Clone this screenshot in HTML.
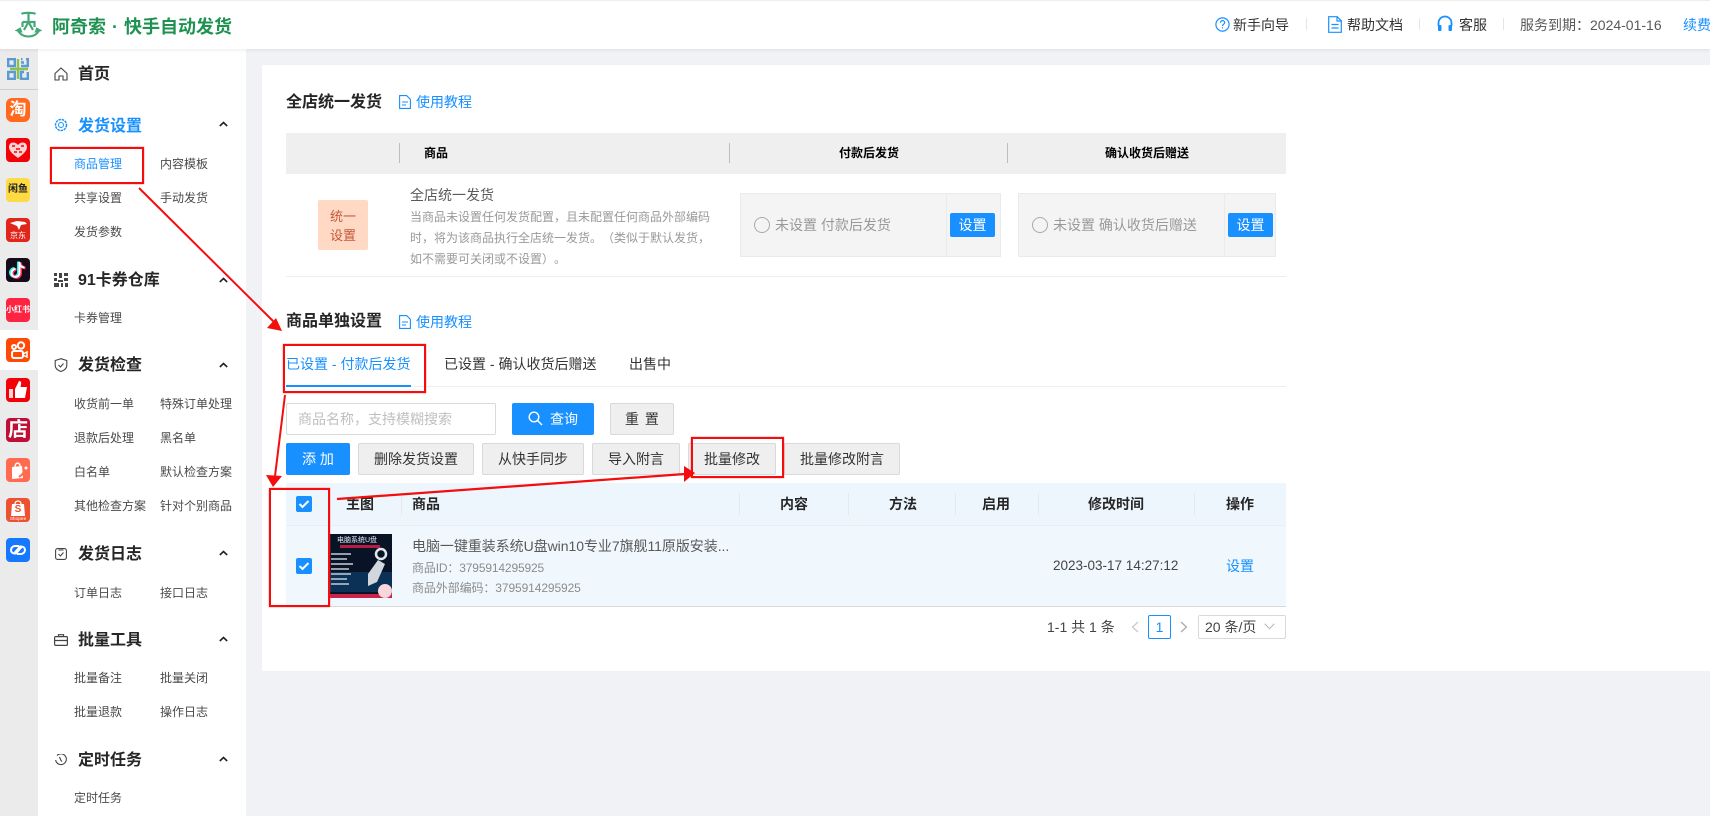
<!DOCTYPE html>
<html lang="zh-CN"><head><meta charset="utf-8"><title>阿奇索</title>
<style>
*{box-sizing:border-box;margin:0;padding:0}
html,body{width:1710px;height:816px;overflow:hidden;background:#f0f2f5;font-family:"Liberation Sans","Noto Sans CJK SC",sans-serif;color:#333;text-spacing-trim:space-all;font-feature-settings:"chws" 0}
.a{position:absolute}
.t{position:absolute;white-space:nowrap;line-height:20px;height:20px}
.h{font-size:16px;font-weight:700;color:#262626}
.s{font-size:12px;color:#4a4a4a}
.btn{position:absolute;height:32px;background:#efefef;border:1px solid #d9d9d9;border-radius:2px;font-size:14px;color:#333;text-align:center;line-height:30px;white-space:nowrap}
.p{background:#1890ff;border-color:#1890ff;color:#fff}
.rb{position:absolute;border:2px solid #f50c0c;box-shadow:0 0 1px #f33}
.ri{position:absolute;left:6px;width:24px;height:24px;border-radius:4px;overflow:hidden;text-align:center;color:#fff}
.sep{position:absolute;width:1px;background:#bdbdbd}
.sep2{position:absolute;width:1px;background:#e3e9ee}
.ck{position:absolute;left:296px;width:16px;height:16px;background:#1890ff;border-radius:2px}
</style></head><body>
<!-- header -->
<div class="a" style="left:0;top:0;width:1710px;height:49px;background:#fff;border-top:1px solid #eee;box-shadow:0 1px 4px rgba(0,0,0,.08);z-index:3">
<svg class="a" style="left:15px;top:10px" width="27" height="28" viewBox="0 0 27 28" fill="none" stroke="#46a878" stroke-width="2.200"><path d="M6.500 3c2-1.600 12-1.600 14 0M13.500 2v9"/><path d="M7.500 11h12v5M7.500 11v5M13.500 11l-4.500 8M13.500 11l4.500 8"/><path d="M2.500 19c2.500 4.500 6 6.500 11 6.500s8.500-2 11-6.500" stroke-width="2"/><path d="M.8 19.500l4.500-2.500 1.500 4zM26.200 19.500l-4.500-2.500-1.500 4z" fill="#46a878" stroke-width="1"/></svg>
<div class="t" style="left:52px;top:16px;font-size:18px;font-weight:700;color:#1f9150;word-spacing:1px">阿奇索 · 快手自动发货</div>
<svg class="a" style="left:1215px;top:16px" width="15" height="15" viewBox="0 0 15 15" fill="none" stroke="#1890ff" stroke-width="1.200"><circle cx="7.500" cy="7.500" r="6.600"/><path d="M5.400 5.800c0-3 4.300-2.700 4.300-.2 0 1.600-2.200 1.700-2.200 3.500"/><path d="M7.500 10.300v1.200"/></svg>
<div class="t" style="left:1233px;top:14px;font-size:14px">新手向导</div>
<div class="a" style="left:1306px;top:17px;width:1px;height:12px;background:#e5e5e5"></div>
<svg class="a" style="left:1328px;top:15px" width="14" height="17" viewBox="0 0 14 17" fill="none" stroke="#1890ff" stroke-width="1.200"><path d="M.7.7h8.500l4.100 4.100v11.500H.7zM9 .7v4.300h4.300M3.500 8.500h7M3.500 12h7"/></svg>
<div class="t" style="left:1347px;top:14px;font-size:14px">帮助文档</div>
<div class="a" style="left:1419px;top:17px;width:1px;height:12px;background:#e5e5e5"></div>
<svg class="a" style="left:1437px;top:14px" width="16" height="17" viewBox="0 0 16 17" fill="none" stroke="#1890ff" stroke-width="1.800"><path d="M1.500 11V8a6.500 6.500 0 0 1 13 0v3"/><rect x="1" y="10" width="3.500" height="6" rx="1" fill="#1890ff" stroke="none"/><rect x="11.500" y="10" width="3.500" height="6" rx="1" fill="#1890ff" stroke="none"/></svg>
<div class="t" style="left:1459px;top:14px;font-size:14px">客服</div>
<div class="a" style="left:1503px;top:17px;width:1px;height:12px;background:#e5e5e5"></div>
<div class="t" style="left:1520px;top:14px;font-size:14px;color:#595959">服务到期：2024-01-16</div>
<div class="t" style="left:1683px;top:14px;font-size:14px;color:#1890ff">续费</div>
</div>
<!-- rail -->
<div class="a" style="left:0;top:49px;width:38px;height:767px;background:#ebebeb"></div>
<div class="a" style="left:0;top:89px;width:38px;height:1px;background:#cfcfcf"></div>
<div class="a" style="left:0;top:330px;width:38px;height:40px;background:#fff"></div>
<svg class="a" style="left:7px;top:58px" width="22" height="22" viewBox="0 0 22 22" fill="none" stroke="#5b9bd5" stroke-width="2.400"><path d="M1.200 8V1.200h6.600V8zM14 1.200h1.500M19 1.200h1.800V8H14M14 4.500h3M1.200 14h6.600v6.800H1.200zM20.800 14v6.800H14V14h3"/><path d="M11 1v20M3 11h18" stroke="#8cc152" stroke-width="2.400"/></svg>
<div class="ri" style="top:98px;background:#ff6a1f;font-size:17px;line-height:24px;font-weight:700;border-radius:6px">淘</div>
<div class="ri" style="top:138px;background:#f40009"><svg width="24" height="24" viewBox="0 0 24 24"><path d="M12 20C5 15 3 12 3 9c0-5 6-6 9-2 3-4 9-3 9 2 0 3-2 6-9 11z" fill="#fbd3d3"/><path d="M6 8h3M10 11h4M15 8h3M8 14h3M13 14h3" stroke="#f40009" stroke-width="1.500"/></svg></div>
<div class="ri" style="top:178px;background:#ffda44;color:#222;font-size:10px;line-height:24px;font-weight:700">闲鱼</div>
<div class="ri" style="top:218px;background:#e1251b"><svg class="a" style="left:0;top:0" width="24" height="14" viewBox="0 0 24 14"><path d="M4 5l7-2 8 1 2 2-6 1-2 5-2-4z" fill="#fff"/></svg><div class="a" style="left:0;top:13px;width:24px;font-size:8px;line-height:10px">京东</div></div>
<div class="ri" style="top:258px;background:#160b18"><svg width="24" height="24" viewBox="0 0 24 24" fill="none" stroke-width="3"><path d="M13.500 4v11a4 4 0 1 1-4-4M13.500 5c.5 3 2.500 4.500 5 4.500" stroke="#25f4ee" transform="translate(-1,-.5)"/><path d="M13.500 4v11a4 4 0 1 1-4-4M13.500 5c.5 3 2.500 4.500 5 4.500" stroke="#fe2c55" transform="translate(1,.5)"/><path d="M13.500 4v11a4 4 0 1 1-4-4M13.500 5c.5 3 2.500 4.500 5 4.500" stroke="#fff" stroke-width="2"/></svg></div>
<div class="ri" style="top:298px;background:#ff2442;font-size:8px;line-height:24px;font-weight:700">小红书</div>
<div class="ri" style="top:338px;background:#ff4906"><svg width="24" height="24" viewBox="0 0 24 24" fill="none" stroke="#fff" stroke-width="2"><circle cx="15" cy="7.500" r="3.200"/><circle cx="8" cy="9" r="2"/><rect x="6" y="13" width="11" height="7" rx="2"/><path d="M17 16l4-2v5l-4-2" stroke-width="1.500"/></svg></div>
<div class="ri" style="top:378px;background:#f40009"><svg width="24" height="24" viewBox="0 0 24 24"><path d="M9 20V11l4-8c2 0 2.500 1.500 2 3.500L14.500 9H21l-2 11z" fill="#fff"/><rect x="3" y="11" width="4" height="9" fill="#ffd6d6"/></svg></div>
<div class="ri" style="top:418px;background:#c00f36;font-size:20px;line-height:24px;font-weight:700">店</div>
<div class="ri" style="top:458px;background:#ff6a50"><svg width="24" height="24" viewBox="0 0 24 24" fill="none"><path d="M6 9l10-1 1 12-11 1z" fill="#fff"/><path d="M9 9c0-5 5-5 5-1" stroke="#fff" stroke-width="1.500"/><path d="M13 19c3-2 5-4 6-8" stroke="#ff6a50" stroke-width="2"/><circle cx="20" cy="10" r="1.500" fill="#fff"/></svg></div>
<div class="ri" style="top:498px;background:#ee5130"><svg class="a" style="left:0;top:0" width="24" height="24" viewBox="0 0 24 24" fill="none"><path d="M6 6h12l1 12H5z" fill="#fff"/><path d="M9 6c0-4 6-4 6 0" stroke="#fff" stroke-width="1.300"/></svg><div class="a" style="left:0;top:6px;width:24px;font-size:10px;line-height:12px;color:#ee5130;font-weight:700">S</div><div class="a" style="left:-6px;top:18px;width:36px;font-size:6px;line-height:6px;transform:scale(.8)">Shopee</div></div>
<div class="ri" style="top:538px;background:#1677ff"><svg width="24" height="24" viewBox="0 0 24 24" fill="none" stroke="#fff" stroke-width="2"><path d="M13 8H9a4.200 4.200 0 0 0-4 4c0 2 1.500 3.500 4 3.500h1l6-7"/><path d="M11 16h4a4.200 4.200 0 0 0 4-4c0-2-1.500-3.500-4-3.500h-1l-6 7"/></svg></div>
<!-- sidebar -->
<div class="a" style="left:38px;top:49px;width:208px;height:767px;background:#fff"></div>
<svg class="a" style="left:54px;top:67px" width="14" height="14" viewBox="0 0 14 14" fill="none" stroke="#444" stroke-width="1.100"><path d="M1 6.500L7 1l6 5.500V13H9V9H5v4H1z"/></svg>
<div class="t h" style="left:78px;top:65px">首页</div>
<svg class="a" style="left:54px;top:118px" width="14" height="14" viewBox="0 0 14 14" fill="none" stroke="#1890ff"><circle cx="7" cy="7" r="2.500"/><circle cx="7" cy="7" r="5.500" stroke-dasharray="2.500 .8" stroke-width="1.500"/></svg>
<div class="t h" style="left:78px;top:117px;color:#1890ff">发货设置</div>
<div class="t s" style="left:74px;top:154px;color:#1890ff">商品管理</div><div class="t s" style="left:160px;top:154px">内容模板</div>
<div class="t s" style="left:74px;top:188px">共享设置</div><div class="t s" style="left:160px;top:188px">手动发货</div>
<div class="t s" style="left:74px;top:222px">发货参数</div>
<svg class="a" style="left:54px;top:273px" width="14" height="14" viewBox="0 0 14 14" fill="#444"><path d="M0 0h3v3H0zM5 0h3v5H5zM10 0h4v3h-4zM0 5h3v3H0zM10 5h4v3h-4zM4 7h5v2H4zM0 10h5v4H0zM7 10h2v4H7zM11 10h3v4h-3z"/></svg>
<div class="t h" style="left:78px;top:271px">91卡券仓库</div>
<div class="t s" style="left:74px;top:308px">卡券管理</div>
<svg class="a" style="left:54px;top:358px" width="14" height="14" viewBox="0 0 14 14" fill="none" stroke="#444" stroke-width="1.100"><path d="M7 .7l5.800 1.800v5c0 3-3 5-5.800 6-2.800-1-5.800-3-5.800-6v-5z"/><path d="M4.500 7l2 2 3-3.500"/></svg>
<div class="t h" style="left:78px;top:356px">发货检查</div>
<div class="t s" style="left:74px;top:394px">收货前一单</div><div class="t s" style="left:160px;top:394px">特殊订单处理</div>
<div class="t s" style="left:74px;top:428px">退款后处理</div><div class="t s" style="left:160px;top:428px">黑名单</div>
<div class="t s" style="left:74px;top:462px">白名单</div><div class="t s" style="left:160px;top:462px">默认检查方案</div>
<div class="t s" style="left:74px;top:496px">其他检查方案</div><div class="t s" style="left:160px;top:496px">针对个别商品</div>
<svg class="a" style="left:55px;top:548px" width="12" height="12" viewBox="0 0 12 12" fill="none" stroke="#444" stroke-width="1.100"><rect x=".6" y=".6" width="10.800" height="10.800" rx="2"/><path d="M3.500 6l2 2 3-3.500M3.500 2h5"/></svg>
<div class="t h" style="left:78px;top:545px">发货日志</div>
<div class="t s" style="left:74px;top:583px">订单日志</div><div class="t s" style="left:160px;top:583px">接口日志</div>
<svg class="a" style="left:54px;top:634px" width="14" height="12" viewBox="0 0 14 12" fill="none" stroke="#444" stroke-width="1.200"><rect x=".6" y="2.600" width="12.800" height="8.800" rx="1"/><path d="M4.500 2.500V.7h5v1.800M.6 6.500h12.800"/></svg>
<div class="t h" style="left:78px;top:631px">批量工具</div>
<div class="t s" style="left:74px;top:668px">批量备注</div><div class="t s" style="left:160px;top:668px">批量关闭</div>
<div class="t s" style="left:74px;top:702px">批量退款</div><div class="t s" style="left:160px;top:702px">操作日志</div>
<svg class="a" style="left:55px;top:754px" width="12" height="12" viewBox="0 0 12 12" fill="none" stroke="#444" stroke-width="1.100"><path d="M2 1.500A5.400 5.400 0 1 1 .6 6M4.500 3l1.500 3.500 1 1"/></svg>
<div class="t h" style="left:78px;top:751px">定时任务</div>
<div class="t s" style="left:74px;top:788px">定时任务</div>
<svg class="a" style="left:219px;top:121px" width="9" height="6" viewBox="0 0 9 6" fill="none" stroke="#222" stroke-width="1.600"><path d="M.8 5L4.500 1.500 8.200 5"/></svg>
<svg class="a" style="left:219px;top:277px" width="9" height="6" viewBox="0 0 9 6" fill="none" stroke="#222" stroke-width="1.600"><path d="M.8 5L4.500 1.500 8.200 5"/></svg>
<svg class="a" style="left:219px;top:362px" width="9" height="6" viewBox="0 0 9 6" fill="none" stroke="#222" stroke-width="1.600"><path d="M.8 5L4.500 1.500 8.200 5"/></svg>
<svg class="a" style="left:219px;top:550px" width="9" height="6" viewBox="0 0 9 6" fill="none" stroke="#222" stroke-width="1.600"><path d="M.8 5L4.500 1.500 8.200 5"/></svg>
<svg class="a" style="left:219px;top:636px" width="9" height="6" viewBox="0 0 9 6" fill="none" stroke="#222" stroke-width="1.600"><path d="M.8 5L4.500 1.500 8.200 5"/></svg>
<svg class="a" style="left:219px;top:756px" width="9" height="6" viewBox="0 0 9 6" fill="none" stroke="#222" stroke-width="1.600"><path d="M.8 5L4.500 1.500 8.200 5"/></svg>
<!-- card -->
<div class="a" style="left:262px;top:65px;width:1448px;height:606px;background:#fff"></div>
<div class="t h" style="left:286px;top:93px">全店统一发货</div>
<svg class="a" style="left:399px;top:95px" width="12" height="14" viewBox="0 0 12 14" fill="none" stroke="#1890ff" stroke-width="1.100"><path d="M.6.6h7l3.800 3.800v9H.6zM3 7h6M3 10h4"/></svg>
<div class="t" style="left:416px;top:92px;font-size:14px;color:#1890ff">使用教程</div>
<div class="a" style="left:286px;top:133px;width:1000px;height:41px;background:#efefef"></div>
<div class="sep" style="left:399px;top:143px;height:20px"></div><div class="sep" style="left:729px;top:143px;height:20px"></div><div class="sep" style="left:1007px;top:143px;height:20px"></div>
<div class="t" style="left:424px;top:143px;font-size:12px;font-weight:700;color:#000">商品</div>
<div class="t" style="left:839px;top:143px;font-size:12px;font-weight:700;color:#000">付款后发货</div>
<div class="t" style="left:1105px;top:143px;font-size:12px;font-weight:700;color:#000">确认收货后赠送</div>
<div class="a" style="left:318px;top:200px;width:50px;height:50px;background:#ffd9c4;border-radius:2px;color:#c5583a;font-size:13px;line-height:19px;text-align:center;padding-top:7px">统一<br>设置</div>
<div class="t" style="left:410px;top:185px;font-size:14px;color:#595959">全店统一发货</div>
<div class="t" style="left:410px;top:207px;font-size:12px;color:#999">当商品未设置任何发货配置，且未配置任何商品外部编码</div>
<div class="t" style="left:410px;top:228px;font-size:12px;color:#999">时，将为该商品执行全店统一发货。（类似于默认发货，</div>
<div class="t" style="left:410px;top:249px;font-size:12px;color:#999">如不需要可关闭或不设置）。</div>
<div class="a" style="left:286px;top:276px;width:1000px;height:1px;background:#eee"></div>
<div class="a" style="left:740px;top:193px;width:261px;height:64px;background:#f4f4f4;border:1px solid #eaeaea"></div>
<div class="a" style="left:946px;top:193px;width:1px;height:64px;background:#eaeaea"></div>
<div class="a" style="left:754px;top:217px;width:16px;height:16px;border:1.500px solid #aaa;border-radius:50%"></div>
<div class="t" style="left:775px;top:215px;font-size:14px;color:#999">未设置 付款后发货</div>
<div class="a" style="left:950px;top:213px;width:45px;height:24px;background:#1890ff;border-radius:2px;color:#fff;font-size:14px;line-height:24px;text-align:center">设置</div>
<div class="a" style="left:1018px;top:193px;width:258px;height:64px;background:#f4f4f4;border:1px solid #eaeaea"></div>
<div class="a" style="left:1224px;top:193px;width:1px;height:64px;background:#eaeaea"></div>
<div class="a" style="left:1032px;top:217px;width:16px;height:16px;border:1.500px solid #aaa;border-radius:50%"></div>
<div class="t" style="left:1053px;top:215px;font-size:14px;color:#999">未设置 确认收货后赠送</div>
<div class="a" style="left:1228px;top:213px;width:45px;height:24px;background:#1890ff;border-radius:2px;color:#fff;font-size:14px;line-height:24px;text-align:center">设置</div>
<div class="t h" style="left:286px;top:312px">商品单独设置</div>
<svg class="a" style="left:399px;top:315px" width="12" height="14" viewBox="0 0 12 14" fill="none" stroke="#1890ff" stroke-width="1.100"><path d="M.6.6h7l3.800 3.800v9H.6zM3 7h6M3 10h4"/></svg>
<div class="t" style="left:416px;top:312px;font-size:14px;color:#1890ff">使用教程</div>
<div class="a" style="left:286px;top:386px;width:1000px;height:1px;background:#eee"></div>
<div class="t" style="left:286px;top:354px;font-size:14px;color:#1890ff">已设置 - 付款后发货</div>
<div class="a" style="left:286px;top:385px;width:125px;height:2px;background:#1890ff"></div>
<div class="t" style="left:444px;top:354px;font-size:14px">已设置 - 确认收货后赠送</div>
<div class="t" style="left:629px;top:354px;font-size:14px">出售中</div>
<div class="a" style="left:286px;top:403px;width:210px;height:32px;border:1px solid #d9d9d9;border-radius:2px;background:#fff"></div>
<div class="t" style="left:298px;top:409px;font-size:14px;color:#bfbfbf">商品名称，支持模糊搜索</div>
<div class="btn p" style="left:512px;top:403px;width:82px"></div>
<svg class="a" style="left:528px;top:411px" width="15" height="15" viewBox="0 0 15 15" fill="none" stroke="#fff" stroke-width="1.400"><circle cx="6" cy="6" r="4.800"/><path d="M9.500 9.500l4.500 4.500"/></svg>
<div class="t" style="left:550px;top:409px;font-size:14px;color:#fff">查询</div>
<div class="btn" style="left:610px;top:403px;width:64px;word-spacing:2px">重 置</div>
<div class="btn p" style="left:286px;top:443px;width:64px">添 加</div>
<div class="btn" style="left:358px;top:443px;width:116px">删除发货设置</div>
<div class="btn" style="left:482px;top:443px;width:102px">从快手同步</div>
<div class="btn" style="left:592px;top:443px;width:88px">导入附言</div>
<div class="btn" style="left:688px;top:443px;width:88px">批量修改</div>
<div class="btn" style="left:784px;top:443px;width:116px">批量修改附言</div>
<!-- table -->
<div class="a" style="left:286px;top:483px;width:1000px;height:42px;background:#eef6fd"></div>
<div class="a" style="left:286px;top:525px;width:1000px;height:82px;background:#f0f8fe;border-top:1px solid #e8eef3;border-bottom:1px solid #d9d9d9"></div>
<div class="ck" style="top:496px"><svg width="16" height="16" viewBox="0 0 16 16" fill="none" stroke="#fff" stroke-width="2"><path d="M3.500 8l3 3 6-6"/></svg></div>
<div class="ck" style="top:558px"><svg width="16" height="16" viewBox="0 0 16 16" fill="none" stroke="#fff" stroke-width="2"><path d="M3.500 8l3 3 6-6"/></svg></div>
<div class="t" style="left:346px;top:494px;font-size:14px;font-weight:700;color:#262626">主图</div>
<div class="sep2" style="left:401px;top:493px;height:22px"></div>
<div class="t" style="left:412px;top:494px;font-size:14px;font-weight:700;color:#262626">商品</div>
<div class="sep2" style="left:739px;top:493px;height:22px"></div>
<div class="t" style="left:780px;top:494px;font-size:14px;font-weight:700;color:#262626">内容</div>
<div class="sep2" style="left:848px;top:493px;height:22px"></div>
<div class="t" style="left:889px;top:494px;font-size:14px;font-weight:700;color:#262626">方法</div>
<div class="sep2" style="left:955px;top:493px;height:22px"></div>
<div class="t" style="left:982px;top:494px;font-size:14px;font-weight:700;color:#262626">启用</div>
<div class="sep2" style="left:1038px;top:493px;height:22px"></div>
<div class="t" style="left:1088px;top:494px;font-size:14px;font-weight:700;color:#262626">修改时间</div>
<div class="sep2" style="left:1194px;top:493px;height:22px"></div>
<div class="t" style="left:1226px;top:494px;font-size:14px;font-weight:700;color:#262626">操作</div>
<svg class="a" style="left:328px;top:534px" width="64" height="64" viewBox="0 0 64 64">
<rect width="64" height="64" fill="#081426"/><rect x="0" y="38" width="64" height="20" fill="#0c3157"/>
<text x="9" y="8" font-size="7" fill="#e8eef6" font-family="Liberation Sans,Noto Sans CJK SC,sans-serif">电脑系统U盘</text>
<rect x="12" y="11" width="40" height="3" fill="#b81c44"/>
<path d="M3 20h20M3 25h16M3 30h22M3 35h18M3 40h20M3 45h16M3 50h18" stroke="#c2ccd8" stroke-width="1.400"/>
<path d="M40 40l10-14 7 4-8 18-9 4z" fill="#d2d7dd"/><circle cx="53" cy="20" r="5" fill="none" stroke="#e3e7ec" stroke-width="2.500"/>
<rect y="60" width="64" height="4" fill="#c9224c"/><circle cx="57" cy="57" r="7" fill="#f8d7dc"/>
</svg>
<div class="t" style="left:412px;top:536px;font-size:14px;color:#595959;letter-spacing:-.05px">电脑一键重装系统U盘win10专业7旗舰11原版安装...</div>
<div class="t" style="left:412px;top:558px;font-size:12px;color:#8c8c8c;letter-spacing:-.15px">商品ID：3795914295925</div>
<div class="t" style="left:412px;top:578px;font-size:12px;color:#8c8c8c;letter-spacing:-.1px">商品外部编码：3795914295925</div>
<div class="t" style="left:1053px;top:556px;font-size:13.500px;color:#444">2023-03-17 14:27:12</div>
<div class="t" style="left:1226px;top:556px;font-size:14px;color:#1890ff">设置</div>
<!-- pagination -->
<div class="t" style="left:1047px;top:617px;font-size:14px;color:#444">1-1 共 1 条</div>
<svg class="a" style="left:1131px;top:621px" width="8" height="12" viewBox="0 0 8 12" fill="none" stroke="#c8c8c8" stroke-width="1.200"><path d="M7 1L1.500 6 7 11"/></svg>
<div class="a" style="left:1148px;top:615px;width:23px;height:24px;border:1px solid #1890ff;border-radius:2px;color:#1890ff;font-size:14px;line-height:22px;text-align:center">1</div>
<svg class="a" style="left:1180px;top:621px" width="8" height="12" viewBox="0 0 8 12" fill="none" stroke="#a8a8a8" stroke-width="1.200"><path d="M1 1l5.500 5L1 11"/></svg>
<div class="a" style="left:1198px;top:615px;width:88px;height:24px;border:1px solid #d9d9d9;border-radius:2px"></div>
<div class="t" style="left:1205px;top:617px;font-size:14px;color:#444">20 条/页</div>
<svg class="a" style="left:1264px;top:623px" width="11" height="7" viewBox="0 0 11 7" fill="none" stroke="#bbb" stroke-width="1.100"><path d="M.7.7l4.800 5 4.800-5"/></svg>
<!-- annotations -->
<div class="rb" style="left:50px;top:147px;width:94px;height:37px"></div>
<div class="rb" style="left:283px;top:344px;width:143px;height:49px"></div>
<div class="rb" style="left:691px;top:437px;width:93px;height:41px"></div>
<div class="rb" style="left:269px;top:488px;width:61px;height:119px"></div>
<svg class="a" style="left:0;top:0;z-index:5;pointer-events:none" width="1710" height="816" fill="#f50c0c" stroke="#f50c0c">
<path d="M139 188L274 322" stroke-width="2" fill="none"/><path d="M282 331L267 328 276 318z" stroke="none"/>
<path d="M285 395L275 476" stroke-width="2" fill="none"/><path d="M273 487L266 475 282 476z" stroke="none"/>
<path d="M337 499L685 474" stroke-width="2.200" fill="none"/><path d="M695 473L684 466 684 482z" stroke="none"/>
</svg>
</body></html>
